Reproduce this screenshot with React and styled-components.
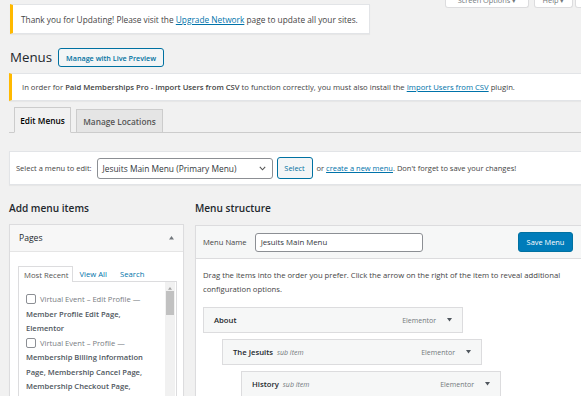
import React from "react";
import styled, { createGlobalStyle } from "styled-components";

const Global = createGlobalStyle`
  html, body { margin: 0; padding: 0; }
  body {
    background: #f1f1f1;
    font-family: "Open Sans", "Noto Sans", sans-serif;
    color: #444;
    overflow: hidden;
    width: 581px;
    height: 396px;
  }
  * { box-sizing: border-box; }
`;

const Wrap = styled.div`
  padding-left: 9px;
  width: 584px;
`;

const TopRow = styled.div`
  display: flex;
  justify-content: space-between;
  align-items: flex-start;
`;

const UpdateNag = styled.div`
  margin-top: 4px;
  margin-left: 1px;
  width: 360px;
  height: 30px;
  display: flex;
  align-items: center;
  background: #fff;
  border: 1px solid #e2e4e7;
  border-left: 3px solid #ffb900;
  box-shadow: 0 1px 1px rgba(0, 0, 0, 0.04);
  padding-left: 8px;
  font-size: 8.3px;
  color: #444;
  white-space: nowrap;
`;

const Link = styled.a`
  color: #0073aa;
  text-decoration: underline;
`;

const ScreenMeta = styled.div`
  display: flex;
  gap: 5px;
  margin-top: -12px;
  margin-right: -2px;
`;

const MetaTab = styled.div`
  width: ${(p) => p.$w}px;
  height: 20px;
  background: #fff;
  border: 1px solid #dcdcde;
  border-top: none;
  border-radius: 0 0 3px 3px;
  display: flex;
  align-items: flex-end;
  justify-content: center;
  padding-bottom: 2px;
  font-size: 7.4px;
  line-height: 10px;
  color: #72777c;
  white-space: nowrap;
`;

const HeadingRow = styled.div`
  display: flex;
  align-items: center;
  gap: 6px;
  margin-top: 14px;
  padding-left: 1px;
  height: 19px;
`;

const H1 = styled.h1`
  margin: 0;
  font-size: 13.3px;
  font-weight: 400;
  line-height: 19px;
  color: #23282d;
`;

const OutlineButton = styled.button`
  height: ${(p) => p.$h || 19}px;
  width: ${(p) => p.$w}px;
  padding: 0;
  border: 1px solid #0071a1;
  border-radius: 3px;
  background: #f3f5f6;
  color: #0071a1;
  font-family: inherit;
  font-size: ${(p) => p.$fs || 7.2}px;
  font-weight: ${(p) => p.$fw || 600};
  white-space: nowrap;
`;

const Notice = styled.div`
  margin-top: 6px;
  height: 28px;
  display: flex;
  align-items: center;
  background: #fff;
  border: 1px solid #e2e4e7;
  border-left: 3px solid #ffb900;
  box-shadow: 0 1px 1px rgba(0, 0, 0, 0.04);
  padding-left: 10px;
  font-size: 7.7px;
  color: #444;
  white-space: nowrap;
  b { font-weight: 600; }
`;

const NavTabs = styled.div`
  margin-top: 5px;
  display: flex;
  align-items: flex-end;
  gap: 5px;
  padding-left: 5px;
  height: 27px;
  border-bottom: 1px solid #ccc;
`;

const NavTab = styled.div`
  height: ${(p) => (p.$active ? 26 : 24)}px;
  width: ${(p) => p.$w}px;
  margin-bottom: -1px;
  display: flex;
  align-items: center;
  justify-content: center;
  border: 1px solid #ccc;
  border-bottom-color: ${(p) => (p.$active ? "#f1f1f1" : "#ccc")};
  background: ${(p) => (p.$active ? "#f1f1f1" : "#e5e5e5")};
  color: ${(p) => (p.$active ? "#000" : "#555")};
  font-size: 8.3px;
  font-weight: 600;
  white-space: nowrap;
`;

const SelectBar = styled.div`
  margin-top: 18px;
  height: 34px;
  display: flex;
  align-items: center;
  gap: 4px;
  padding: 0 6px;
  background: #fff;
  border: 1px solid #e2e4e7;
  box-shadow: 0 1px 1px rgba(0, 0, 0, 0.04);
  font-size: 7.5px;
  color: #444;
  white-space: nowrap;
`;

const FakeSelect = styled.div`
  width: 176px;
  height: 21px;
  margin-left: 1px;
  display: flex;
  align-items: center;
  justify-content: space-between;
  padding: 0 6px 0 5px;
  border: 1px solid #8c8f94;
  border-radius: 3px;
  background: #fff;
  color: #32373c;
  font-size: 8.4px;
`;

const Columns = styled.div`
  display: flex;
  gap: 11px;
  margin-top: 16px;
`;

const LeftCol = styled.div`
  width: 175px;
  flex: none;
`;

const RightCol = styled.div`
  flex: 1;
  min-width: 0;
`;

const H2 = styled.h2`
  margin: 0 0 ${(p) => p.$mb || 9}px;
  font-size: 10.1px;
  line-height: 14px;
  font-weight: 600;
  color: #23282d;
  white-space: nowrap;
`;

const Box = styled.div`
  background: #fff;
  border: 1px solid #dcdcde;
  box-shadow: 0 1px 1px rgba(0, 0, 0, 0.04);
`;

const BoxHeader = styled.div`
  height: 27px;
  display: flex;
  align-items: center;
  justify-content: space-between;
  padding: 0 9px 0 9px;
  background: #f7f7f7;
  border-bottom: 1px solid #e5e5e5;
  font-size: 8.6px;
  color: #23282d;
`;

const BoxBody = styled.div`
  padding: 14px 7px 0 8px;
  height: 160px;
`;

const InnerTabs = styled.div`
  display: flex;
  align-items: flex-end;
  height: 15px;
`;

const InnerTab = styled.div`
  height: ${(p) => (p.$active ? 16 : 15)}px;
  margin-bottom: ${(p) => (p.$active ? -1 : 0)}px;
  display: flex;
  align-items: center;
  padding-left: 5px;
  padding-right: ${(p) => (p.$active ? 4 : 6)}px;
  border: ${(p) => (p.$active ? "1px solid #dcdcde" : "1px solid transparent")};
  border-bottom: none;
  background: #fff;
  position: relative;
  z-index: 1;
  color: ${(p) => (p.$active ? "#555" : "#0073aa")};
  font-size: 7.7px;
  white-space: nowrap;
`;

const ListBox = styled.div`
  display: flex;
  border: 1px solid #dcdcde;
  height: 130px;
  width: 159px;
`;

const ListItems = styled.div`
  flex: 1;
  padding: 10px 0 0 7px;
  font-size: 7.6px;
  line-height: 14.5px;
  color: #50575e;
  white-space: nowrap;
`;

const ItemLine = styled.div`
  display: flex;
  align-items: center;
  font-weight: ${(p) => (p.$bold ? 600 : 400)};
  color: ${(p) => (p.$bold ? "#50575e" : "#787c82")};
`;

const CheckBox = styled.span`
  width: 10px;
  height: 10px;
  flex: none;
  border: 1px solid #8c8f94;
  border-radius: 2px;
  background: #fff;
  margin-right: 4px;
`;

const ScrollTrack = styled.div`
  width: 10px;
  margin-right: 1px;
  background: #f1f1f1;
  display: flex;
  flex-direction: column;
  align-items: center;
  padding-top: 5px;
`;

const ScrollThumb = styled.div`
  width: 8px;
  height: 24px;
  margin-top: 1px;
  background: #c1c1c1;
`;

const MenuPanel = styled.div`
  background: #fff;
  border: 1px solid #dcdcde;
  box-shadow: 0 1px 1px rgba(0, 0, 0, 0.04);
  height: 200px;
`;

const PanelHeader = styled.div`
  height: 33px;
  display: flex;
  align-items: center;
  padding: 0 10px 0 7px;
  background: #f6f7f7;
  border-bottom: 1px solid #dcdcde;
  font-size: 7.6px;
  color: #444;
`;

const NameLabel = styled.span`
  margin-right: 8px;
  white-space: nowrap;
`;

const NameInput = styled.div`
  width: 168px;
  height: 19px;
  display: flex;
  align-items: center;
  padding-left: 5px;
  border: 1px solid #8c8f94;
  border-radius: 3px;
  background: #fff;
  color: #32373c;
  font-size: 7.8px;
`;

const PrimaryButton = styled.button`
  margin-left: auto;
  width: 55px;
  height: 20px;
  padding: 0;
  border: 1px solid #0071a1;
  border-radius: 3px;
  background: #007cba;
  color: #fff;
  font-family: inherit;
  font-size: 7.4px;
  white-space: nowrap;
`;

const PanelBody = styled.div`
  padding: 9px 7px 0 7px;
`;

const Desc = styled.p`
  margin: 0 0 11px;
  font-size: 7.7px;
  line-height: 14px;
  color: #444;
  white-space: nowrap;
`;

const MenuList = styled.div`
  display: flex;
  flex-direction: column;
  gap: 6px;
`;

const MenuItem = styled.div`
  width: 260px;
  height: 26px;
  margin-left: ${(p) => p.$depth * 19}px;
  display: flex;
  align-items: center;
  padding: 0 10px 0 10px;
  background: #f6f7f7;
  border: 1px solid #dcdcde;
  font-size: 7px;
  white-space: nowrap;
`;

const ItemTitle = styled.span`
  font-weight: 600;
  font-size: 7.7px;
  color: #23282d;
`;

const SubItem = styled.span`
  margin-left: 4px;
  font-style: italic;
  color: #72777c;
`;

const ItemType = styled.span`
  margin-left: auto;
  margin-right: 11px;
  color: #72777c;
`;

const Tri = ({ dir = "down", size = 5, color = "#50575e" }) => (
  <svg width={size} height={size * 0.7} viewBox="0 0 10 7" style={{ display: "block" }}>
    <polygon points={dir === "down" ? "0,0 10,0 5,7" : "0,7 10,7 5,0"} fill={color} />
  </svg>
);

const Chevron = () => (
  <svg width="7" height="5" viewBox="0 0 7 5" style={{ display: "block" }}>
    <polyline points="0.8,0.8 3.5,3.8 6.2,0.8" fill="none" stroke="#555" strokeWidth="1.1" />
  </svg>
);

export default function App() {
  return (
    <>
      <Global />
      <Wrap>
        <TopRow>
          <UpdateNag>
            Thank you for Updating! Please visit the&nbsp;<Link>Upgrade Network</Link>&nbsp;page to update all your sites.
          </UpdateNag>
          <ScreenMeta>
            <MetaTab $w={84}>Screen Options ▾</MetaTab>
            <MetaTab $w={39}>Help ▾</MetaTab>
            <MetaTab $w={11} style={{ marginLeft: -3 }} />
          </ScreenMeta>
        </TopRow>

        <HeadingRow>
          <H1>Menus</H1>
          <OutlineButton $w={106}>Manage with Live Preview</OutlineButton>
        </HeadingRow>

        <Notice>
          In order for&nbsp;<b>Paid Memberships Pro - Import Users from CSV</b>&nbsp;to function correctly, you must also install the&nbsp;
          <Link>Import Users from CSV</Link>&nbsp;plugin.
        </Notice>

        <NavTabs>
          <NavTab $active $w={57}>Edit Menus</NavTab>
          <NavTab $w={87}>Manage Locations</NavTab>
        </NavTabs>

        <SelectBar>
          <span>Select a menu to edit:</span>
          <FakeSelect>
            <span>Jesuits Main Menu (Primary Menu)</span>
            <Chevron />
          </FakeSelect>
          <OutlineButton $w={36} $h={22} $fw={400} $fs={7.4}>Select</OutlineButton>
          <span>
            or <Link>create a new menu</Link>. Don't forget to save your changes!
          </span>
        </SelectBar>

        <Columns>
          <LeftCol>
            <H2>Add menu items</H2>
            <Box>
              <BoxHeader>
                <span>Pages</span>
                <Tri dir="up" size={5} color="#72777c" />
              </BoxHeader>
              <BoxBody>
                <InnerTabs>
                  <InnerTab $active>Most Recent</InnerTab>
                  <InnerTab>View All</InnerTab>
                  <InnerTab>Search</InnerTab>
                </InnerTabs>
                <ListBox>
                  <ListItems>
                    <ItemLine>
                      <CheckBox />
                      Virtual Event – Edit Profile —
                    </ItemLine>
                    <ItemLine $bold>Member Profile Edit Page,</ItemLine>
                    <ItemLine $bold>Elementor</ItemLine>
                    <ItemLine>
                      <CheckBox />
                      Virtual Event – Profile —
                    </ItemLine>
                    <ItemLine $bold>Membership Billing Information</ItemLine>
                    <ItemLine $bold>Page, Membership Cancel Page,</ItemLine>
                    <ItemLine $bold>Membership Checkout Page,</ItemLine>
                  </ListItems>
                  <ScrollTrack>
                    <Tri dir="up" size={4} color="#a3a3a3" />
                    <ScrollThumb />
                  </ScrollTrack>
                </ListBox>
              </BoxBody>
            </Box>
          </LeftCol>

          <RightCol>
            <H2 $mb={10}>Menu structure</H2>
            <MenuPanel>
              <PanelHeader>
                <NameLabel>Menu Name</NameLabel>
                <NameInput>Jesuits Main Menu</NameInput>
                <PrimaryButton>Save Menu</PrimaryButton>
              </PanelHeader>
              <PanelBody>
                <Desc>
                  Drag the items into the order you prefer. Click the arrow on the right of the item to reveal additional
                  <br />
                  configuration options.
                </Desc>
                <MenuList>
                  <MenuItem $depth={0}>
                    <ItemTitle>About</ItemTitle>
                    <ItemType>Elementor</ItemType>
                    <Tri />
                  </MenuItem>
                  <MenuItem $depth={1}>
                    <ItemTitle>The Jesuits</ItemTitle>
                    <SubItem>sub item</SubItem>
                    <ItemType>Elementor</ItemType>
                    <Tri />
                  </MenuItem>
                  <MenuItem $depth={2}>
                    <ItemTitle>History</ItemTitle>
                    <SubItem>sub item</SubItem>
                    <ItemType>Elementor</ItemType>
                    <Tri />
                  </MenuItem>
                </MenuList>
              </PanelBody>
            </MenuPanel>
          </RightCol>
        </Columns>
      </Wrap>
    </>
  );
}
